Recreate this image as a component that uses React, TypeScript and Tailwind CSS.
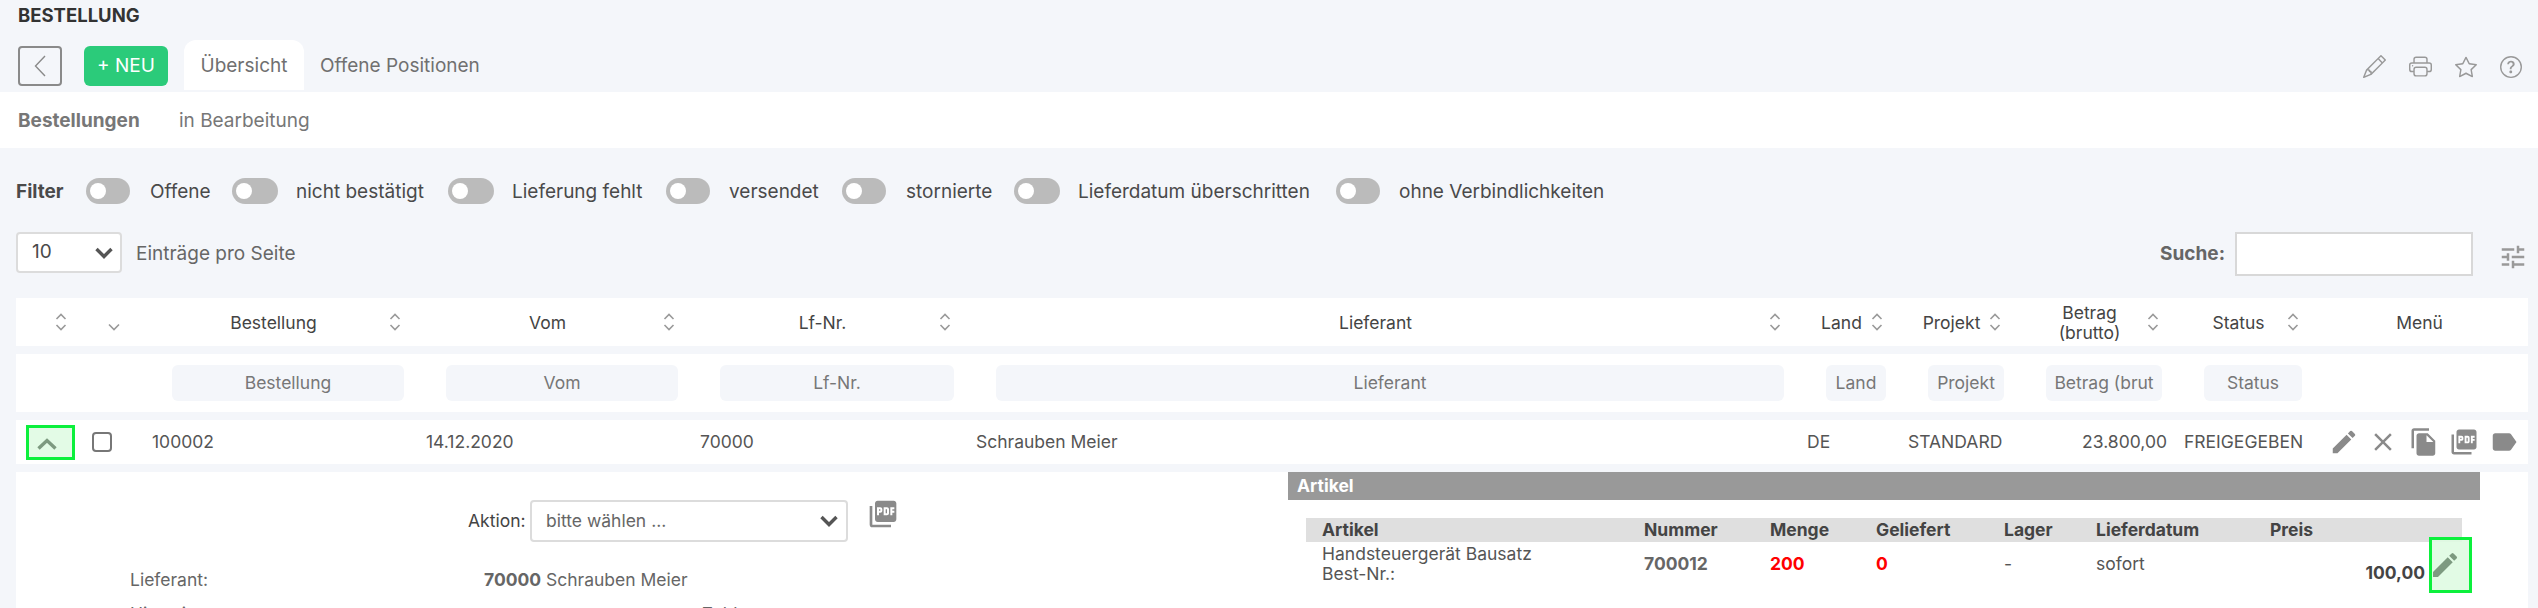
import React from 'react';
import { MdEdit, MdClose, MdFileCopy, MdPictureAsPdf, MdLabel, MdTune } from 'react-icons/md';
import { BsPencil, BsPrinter, BsStar, BsQuestionCircle } from 'react-icons/bs';

const SortIcon = () => (
  <svg width="12" height="18" viewBox="0 0 12 18" fill="none" stroke="#9a9a9a" strokeWidth="1.6" className="shrink-0">
    <path d="M1.5 6 L6 1.5 L10.5 6" />
    <path d="M1.5 12 L6 16.5 L10.5 12" />
  </svg>
);

const Toggle = ({ className }: { className: string }) => (
  <span className={`${className} h-[26px] rounded-full bg-[#bbbbbb] flex items-center pl-1 shrink-0`}>
    <span className="w-[16px] h-[16px] rounded-full bg-white" />
  </span>
);

const Chevron = () => (
  <svg width="18" height="12" viewBox="0 0 18 12" fill="none" stroke="#555" strokeWidth="3.4">
    <path d="M1.5 2 L9 9.5 L16.5 2" />
  </svg>
);

const HeadCell = ({ className, children }: { className: string; children: React.ReactNode }) => (
  <div className={`${className} flex items-center pl-[7px] pr-[24px]`}>
    <span className="flex-1 text-center pt-[2px]">{children}</span>
    <SortIcon />
  </div>
);

const FilterCell = ({ className, label }: { className: string; label: string }) => (
  <div className={`${className} px-[21px]`}>
    <div className="h-[36px] pt-px rounded-md bg-[#f4f6fa] flex items-center justify-center overflow-hidden whitespace-nowrap">{label}</div>
  </div>
);

const FILTERS = [
  { label: 'Offene', toggle: 'w-[44px]', text: 'ml-[20px] w-[82px]' },
  { label: 'nicht bestätigt', toggle: 'w-[46px]', text: 'ml-[18px] w-[152px]' },
  { label: 'Lieferung fehlt', toggle: 'w-[46px]', text: 'ml-[18px] w-[154px]' },
  { label: 'versendet', toggle: 'w-[44px]', text: 'ml-[19px] w-[113px]' },
  { label: 'stornierte', toggle: 'w-[44px]', text: 'ml-[20px] w-[108px]' },
  { label: 'Lieferdatum überschritten', toggle: 'w-[46px]', text: 'ml-[18px] w-[258px]' },
  { label: 'ohne Verbindlichkeiten', toggle: 'w-[44px]', text: 'ml-[19px]' },
];

const App: React.FC = () => {
  return (
    <div className="w-[2538px] h-[608px] overflow-hidden bg-[#f4f6fa] text-[19px] text-[#4a4a4a] font-['Inter',sans-serif]">
      <div className="h-[92px] px-[18px]">
        <h1 className="h-[30px] pt-px flex items-center font-bold text-[#333] text-[18.5px]">BESTELLUNG</h1>
        <div className="flex items-start mt-[10px]">
          <button className="w-[44px] h-[40px] mt-[6px] rounded border-2 border-[#8a8a8a] flex items-center justify-center">
            <svg width="12" height="22" viewBox="0 0 12 22" fill="none" stroke="#8a8a8a" strokeWidth="1.4">
              <path d="M11 1 L1.5 11 L11 21" />
            </svg>
          </button>
          <button className="w-[84px] h-[40px] mt-[6px] ml-[22px] pt-px rounded-md bg-[#2bcb7a] text-white flex items-center justify-center">+ NEU</button>
          <div className="w-[120px] h-[50px] ml-[16px] pt-[2px] rounded-t-xl bg-white flex items-center justify-center text-[#707070]">Übersicht</div>
          <div className="h-[50px] ml-[16px] pt-[2px] flex items-center text-[#707070]">Offene Positionen</div>
          <div className="ml-auto mr-[-2px] mt-[15px] flex items-center gap-[23px] text-[#999]">
            <BsPencil size={23} />
            <BsPrinter size={23} />
            <BsStar size={22} />
            <BsQuestionCircle size={22} />
          </div>
        </div>
      </div>

      <div className="h-[56px] pt-[2px] bg-white flex items-center px-[18px] text-[#777]">
        <span className="font-bold w-[161px]">Bestellungen</span>
        <span>in Bearbeitung</span>
      </div>

      <div className="flex items-center h-[26px] mt-[30px] pl-[16px]">
        <span className="font-bold w-[70px] pt-[2px]">Filter</span>
        {FILTERS.map(f => (
          <React.Fragment key={f.label}>
            <Toggle className={f.toggle} />
            <span className={`${f.text} pt-[2px] shrink-0 whitespace-nowrap`}>{f.label}</span>
          </React.Fragment>
        ))}
      </div>

      <div className="flex items-center h-[44px] mt-[28px] pl-[16px] pr-[10px]">
        <div className="w-[106px] h-[41px] self-start bg-white border-2 border-[#dcdcdc] rounded flex items-center justify-between pl-[14px] pr-[7px]">
          <span>10</span>
          <Chevron />
        </div>
        <span className="ml-[14px] text-[#666]">Einträge pro Seite</span>
        <span className="ml-auto font-bold text-[#666]">Suche:</span>
        <div className="w-[238px] h-[44px] ml-[10px] bg-white border-2 border-[#d8d8d8]" />
        <MdTune size={30} className="ml-[25px] mt-[6px] text-[#999]" />
      </div>

      <div className="ml-[16px] mr-[10px] mt-[22px] flex flex-col gap-[8px] text-[17.5px]">
        {/* header row */}
        <div className="h-[48px] bg-white flex items-center text-[#444]">
          <div className="w-[60px] flex justify-end pr-[9px]"><SortIcon /></div>
          <div className="w-[75px] flex justify-center">
            <svg width="12" height="8" viewBox="0 0 12 8" fill="none" stroke="#999" strokeWidth="1.6" className="mt-[10px]"><path d="M1 1.5 L6 6.5 L11 1.5" /></svg>
          </div>
          <HeadCell className="w-[274px]">Bestellung</HeadCell>
          <HeadCell className="w-[274px]">Vom</HeadCell>
          <HeadCell className="w-[276px]">Lf-Nr.</HeadCell>
          <HeadCell className="w-[830px]">Lieferant</HeadCell>
          <HeadCell className="w-[102px]">Land</HeadCell>
          <HeadCell className="w-[118px]">Projekt</HeadCell>
          <HeadCell className="w-[158px]"><span className="block leading-[20px]">Betrag<br />(brutto)</span></HeadCell>
          <HeadCell className="w-[140px]">Status</HeadCell>
          <div className="flex-1 text-center pr-[12px] pt-[2px]">Menü</div>
        </div>

        {/* filter inputs */}
        <div className="h-[58px] bg-white flex items-center text-[#777]">
          <div className="w-[135px]" />
          <FilterCell className="w-[274px]" label="Bestellung" />
          <FilterCell className="w-[274px]" label="Vom" />
          <FilterCell className="w-[276px]" label="Lf-Nr." />
          <FilterCell className="w-[830px]" label="Lieferant" />
          <FilterCell className="w-[102px]" label="Land" />
          <FilterCell className="w-[118px]" label="Projekt" />
          <FilterCell className="w-[158px]" label="Betrag (brut" />
          <FilterCell className="w-[140px]" label="Status" />
        </div>

        {/* data row */}
        <div className="h-[44px] bg-white flex items-center text-[#555]">
          <div className="w-[60px] pl-[10px]">
            <div className="w-[49px] h-[35px] border-[3px] border-[#0cf03c] bg-[#e3fbe6] flex items-center pl-[8px]">
              <svg width="20" height="12" viewBox="0 0 20 12" fill="none" stroke="#7d9a80" strokeWidth="3.4" className="mt-[3px]"><path d="M1.5 10.5 L10 2.5 L18.5 10.5" /></svg>
            </div>
          </div>
          <div className="w-[75px] pl-[16px]"><div className="w-[20px] h-[20px] rounded-[4px] border-2 border-[#777]" /></div>
          <div className="w-[274px] pl-px pt-px">100002</div>
          <div className="w-[274px] pl-px pt-px">14.12.2020</div>
          <div className="w-[276px] pl-px pt-px">70000</div>
          <div className="w-[830px] pl-px pt-px">Schrauben Meier</div>
          <div className="w-[102px] pl-[2px] pt-px">DE</div>
          <div className="w-[118px] pl-px pt-px">STANDARD</div>
          <div className="w-[158px] text-right pr-[16px] pt-px">23.800,00</div>
          <div className="w-[140px] pl-px pt-px whitespace-nowrap">FREIGEGEBEN</div>
          <div className="flex-1 flex items-center text-[#8a8a8a] pl-[6px]">
            <MdEdit size={30} />
            <MdClose size={30} className="ml-[9px]" />
            <MdFileCopy size={30} className="ml-[11px]" />
            <MdPictureAsPdf size={30} className="ml-[10px]" />
            <MdLabel size={30} className="ml-[10px]" />
          </div>
        </div>

        {/* detail */}
        <div className="h-[136px] bg-white flex">
          <div className="w-[1272px] pt-[28px] text-[#666]">
            <div className="flex items-center h-[42px]">
              <span className="ml-[452px] w-[62px] text-[#444]">Aktion:</span>
              <div className="w-[318px] h-[42px] border-2 border-[#dcdcdc] rounded flex items-center justify-between pl-[14px] pr-[8px]">
                <span>bitte wählen ...</span>
                <Chevron />
              </div>
              <MdPictureAsPdf size={32} className="ml-[19px] mb-[14px] text-[#8a8a8a]" />
            </div>
            <div className="flex h-[28px] items-center mt-[24px]">
              <span className="ml-[114px] w-[354px]">Lieferant:</span>
              <span><b>70000</b> Schrauben Meier</span>
            </div>
            <div className="flex h-[28px] items-center mt-[6px]">
              <span className="ml-[114px] w-[572px]">Hinweis:</span>
              <span>Zahlung</span>
            </div>
          </div>
          <div className="w-[1192px]">
            <div className="h-[28px] pt-px bg-[#999] text-white font-bold flex items-center pl-[9px]">Artikel</div>
            <div className="mx-[18px] mt-[18px] relative">
              <div className="h-[24px] bg-[#dfdfdf] flex items-center font-bold text-[#444] pl-[16px]">
                <span className="w-[322px]">Artikel</span>
                <span className="w-[126px]">Nummer</span>
                <span className="w-[106px]">Menge</span>
                <span className="w-[128px]">Geliefert</span>
                <span className="w-[92px]">Lager</span>
                <span className="w-[174px]">Lieferdatum</span>
                <span>Preis</span>
              </div>
              <div className="flex items-center pl-[16px] text-[#555] h-[44px]">
                <div className="w-[322px] leading-[20px]">Handsteuergerät Bausatz<br />Best-Nr.:</div>
                <span className="w-[126px] font-bold text-[#666]">700012</span>
                <span className="w-[106px] font-bold text-[#f00]">200</span>
                <span className="w-[128px] font-bold text-[#f00]">0</span>
                <span className="w-[92px]">-</span>
                <span className="w-[100px]">sofort</span>
                <span className="flex-1 text-right font-bold text-[#444] pt-[18px] pr-[37px]">100,00</span>
              </div>
              <div className="absolute left-[1123px] top-[19px] w-[43px] h-[56px] border-[3px] border-[#0cf03c] bg-[#dffbe2]/90 flex items-center">
                <MdEdit size={32} className="ml-[-3px] shrink-0 text-[#7d9a80]" />
              </div>
            </div>
          </div>
        </div>
      </div>
    </div>
  );
};

export default App;
